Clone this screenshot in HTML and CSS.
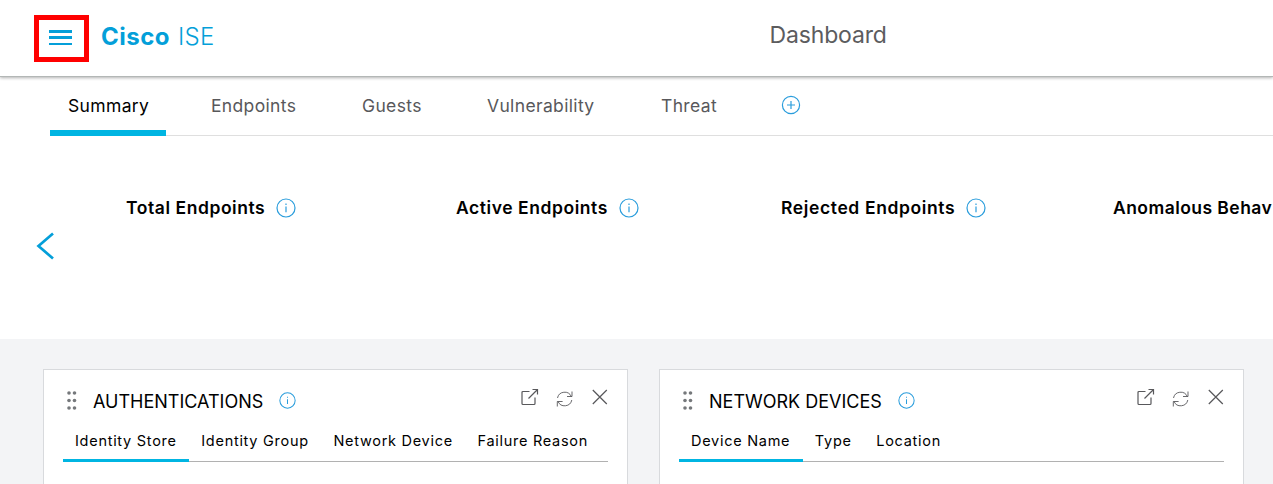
FILE: index.html
```html
<!DOCTYPE html>
<html lang="en">
<head>
<meta charset="utf-8">
<title>Cisco ISE Dashboard</title>
<link rel="stylesheet" href="styles.css">
</head>
<body>
<svg class="sprite" aria-hidden="true">
  <symbol id="info" viewBox="0 0 20 20"><circle cx="10" cy="10" r="9"/><path d="M10 8.6v5.6M10 5.6v1.3"/></symbol>
  <symbol id="grip" viewBox="0 0 10 19"><circle cx="2" cy="2" r="1.8"/><circle cx="7.5" cy="2" r="1.8"/><circle cx="2" cy="9.5" r="1.8"/><circle cx="7.5" cy="9.5" r="1.8"/><circle cx="2" cy="17" r="1.8"/><circle cx="7.5" cy="17" r="1.8"/></symbol>
  <symbol id="open" viewBox="0 0 18 18"><path d="M8.500 3.500H2q-1 0-1 1v11q0 1 1 1h11q1 0 1-1V9.500M7.500 10.500l9-9M11.500 1.500h5v5"/></symbol>
  <symbol id="refresh" viewBox="0 0 18 18"><path d="M1.500 8A7.300 7.300 0 0 1 15.300 6.500M16 1.500v5h-5M15.800 10A7.300 7.300 0 0 1 2 11.500M1.300 16.500v-5h5.300"/></symbol>
  <symbol id="close" viewBox="0 0 16 16"><path d="M.8 1l14 14M14.800 1L.8 15"/></symbol>
</svg>
<header class="topbar">
  <div class="menu"><span class="bars"><i></i><i></i><i class="thin"></i></span></div>
  <div class="brand"><b>Cisco</b><span>ISE</span></div>
  <div class="page-title">Dashboard</div>
</header>
<nav class="tabs">
  <a class="tab t1 active"><span>Summary</span></a>
  <a class="tab t2"><span>Endpoints</span></a>
  <a class="tab t3"><span>Guests</span></a>
  <a class="tab t4"><span>Vulnerability</span></a>
  <a class="tab t5"><span>Threat</span></a>
  <svg class="add" viewBox="0 0 20 20"><circle cx="10" cy="10" r="8.600"/><path d="M10 6v8M6 10h8"/></svg>
</nav>
<section class="metrics">
  <svg class="prev" viewBox="0 0 18 28"><path d="M17 1.500L2.500 14l14.500 12.500"/></svg>
  <div class="metric m1"><h2>Total Endpoints</h2><svg class="info"><use href="#info"/></svg></div>
  <div class="metric m2"><h2>Active Endpoints</h2><svg class="info"><use href="#info"/></svg></div>
  <div class="metric m3"><h2>Rejected Endpoints</h2><svg class="info"><use href="#info"/></svg></div>
  <div class="metric m4"><h2>Anomalous Behav</h2></div>
</section>
<main class="board">
  <article class="card">
    <div class="card-head">
      <svg class="grip"><use href="#grip"/></svg><h3>AUTHENTICATIONS</h3><svg class="info small"><use href="#info"/></svg>
      <div class="actions"><svg class="open"><use href="#open"/></svg><svg class="refresh"><use href="#refresh"/></svg><svg class="close"><use href="#close"/></svg></div>
    </div>
    <div class="subtabs"><a class="subtab on">Identity Store</a><a class="subtab">Identity Group</a><a class="subtab">Network Device</a><a class="subtab">Failure Reason</a></div>
  </article>
  <article class="card">
    <div class="card-head">
      <svg class="grip"><use href="#grip"/></svg><h3>NETWORK DEVICES</h3><svg class="info small"><use href="#info"/></svg>
      <div class="actions"><svg class="open"><use href="#open"/></svg><svg class="refresh"><use href="#refresh"/></svg><svg class="close"><use href="#close"/></svg></div>
    </div>
    <div class="subtabs"><a class="subtab on">Device Name</a><a class="subtab">Type</a><a class="subtab">Location</a></div>
  </article>
</main>
</body>
</html>
```
FILE: styles.css
```css
* { box-sizing: border-box; }
body { margin: 0; width: 1273px; height: 484px; overflow: hidden; background: #fff; color: #000; font-family: Inter, "Liberation Sans", sans-serif; white-space: nowrap; }
.sprite { display: none; }
svg { display: block; flex: none; fill: none; }
h2, h3 { margin: 0; }
.topbar { display: flex; align-items: flex-start; height: 77px; padding: 15px 0 0 34px; border-bottom: 1px solid #b3b7b6; box-shadow: 0 1px 3px rgba(0,0,0,.3); }
.menu { width: 55px; height: 47px; border: 5px solid #f00; padding: 10px; }
.bars { display: flex; flex-direction: column; gap: 3px; width: 23px; }
.bars i { height: 3px; background: #049fd9; }
.bars .thin { height: 2px; margin-top: 1px; }
.brand { display: flex; width: 668px; margin-left: 12px; padding-top: 7px; font-size: 24px; line-height: 30px; color: #049fd9; }
.brand b { width: 77px; font-weight: 700; letter-spacing: .5px; }
.brand span { font-weight: 300; letter-spacing: .3px; }
.page-title { padding-top: 5px; margin-left: .5px; font-size: 23px; line-height: 30px; font-weight: 400; letter-spacing: -.15px; color: #5c5c5e; }
.tabs { display: flex; height: 59px; margin-left: 50px; border-bottom: 1px solid #dfdfdf; font-size: 17.500px; line-height: 22px; letter-spacing: .35px; color: #58585b; }
.tab { height: 59px; padding: 18px 0 0 18px; }
.active { color: #000; border-bottom: 6px solid #00b5e2; }
.t1 { width: 116px; margin-right: 27px; }
.t2 { width: 151px; }
.t3 { width: 125px; }
.t4 { width: 174px; }
.t5 { width: 138px; }
.add { width: 20px; height: 20px; margin-top: 18px; stroke: #2a9ddc; stroke-width: 1.200; }
.metrics { display: flex; height: 203px; padding: 61px 0 0 36px; }
.prev { width: 18px; height: 28px; margin-top: 35px; stroke: #049fd9; stroke-width: 2.700; }
.metric { display: flex; gap: 11px; flex: none; height: 22px; }
.metric h2 { font-size: 17.500px; line-height: 22px; font-weight: 600; letter-spacing: .56px; }
.m1 { width: 330px; margin-left: 72px; }
.m2 { width: 325px; }
.m3 { width: 332px; }
.m3 h2 { letter-spacing: .62px; }
.m4 h2 { letter-spacing: .45px; }
.info { width: 20px; height: 20px; margin-top: 1px; stroke: #2a9ddc; stroke-width: 1.200; }
.board { display: flex; gap: 31px; height: 145px; padding: 30px 0 0 43px; background: #f3f4f6; }
.card { flex: none; width: 585px; height: 130px; padding: 0 19px; background: #fff; border: 1px solid #d8dadd; }
.card-head { display: flex; height: 56px; padding: 21px 0 0 4px; }
.grip { width: 10px; height: 19px; fill: #75787b; }
.card h3 { margin-left: 16px; font-size: 18px; line-height: 22px; font-weight: 400; }
.info.small { width: 17px; height: 17px; margin: 1px 0 0 16px; }
.actions { display: flex; margin-left: auto; stroke: #58585b; stroke-width: 1.200; }
.open { width: 18px; height: 18px; margin-top: -3px; }
.refresh { width: 18px; height: 18px; margin: -1px 0 0 17px; stroke-width: .9; }
.close { width: 16px; height: 16px; margin: -2px 0 0 18px; }
.subtabs { display: flex; height: 36px; border-bottom: 1px solid #b1b1b1; font-size: 14.500px; line-height: 20px; letter-spacing: .72px; }
.subtab { height: 36px; padding: 5px 12.600px 0 12px; }
.on { border-bottom: 3px solid #00b5e2; }
```
